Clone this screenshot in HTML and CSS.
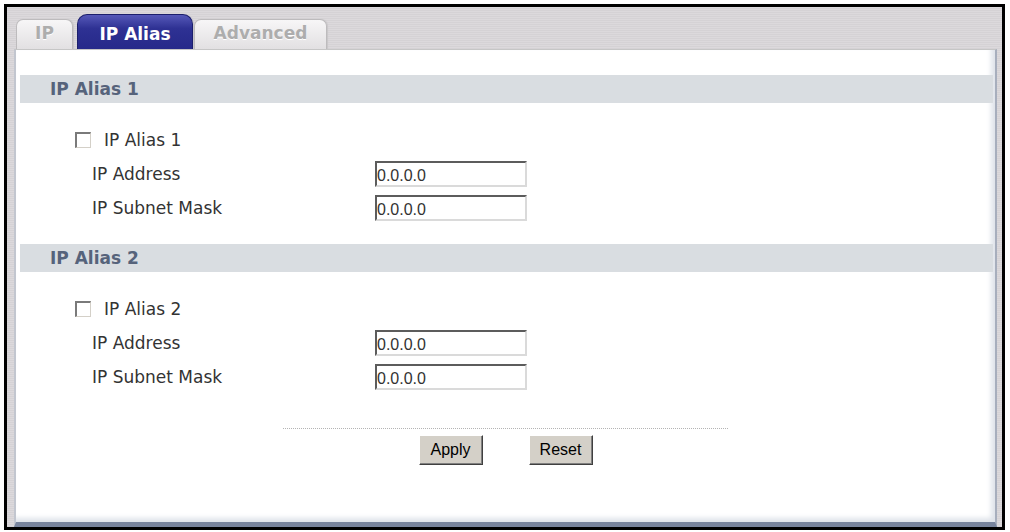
FILE: index.html
```html
<!DOCTYPE html>
<html lang="en">
<head>
    <meta charset="UTF-8">
    <meta name="viewport" content="width=device-width, initial-scale=1.0">
    <title>IP Alias</title>
    <link rel="stylesheet" href="styles.css">
</head>
<body>
    <div class="frame">
        <!-- Tabs -->
        <div class="tabs">
            <div class="tab">IP</div>
            <div class="tab active">IP Alias</div>
            <div class="tab">Advanced</div>
        </div>

        <div class="panel">
            <div class="section">
                <div class="section-title">IP Alias 1</div>
                <div class="section-body">
                    <label class="row check-row"><input type="checkbox" class="check">IP Alias 1</label>
                    <div class="row">
                        <span class="label">IP Address</span>
                        <input type="text" class="field" value="0.0.0.0">
                    </div>
                    <div class="row">
                        <span class="label">IP Subnet Mask</span>
                        <input type="text" class="field" value="0.0.0.0">
                    </div>
                </div>
            </div>

            <div class="section">
                <div class="section-title">IP Alias 2</div>
                <div class="section-body">
                    <label class="row check-row"><input type="checkbox" class="check">IP Alias 2</label>
                    <div class="row">
                        <span class="label">IP Address</span>
                        <input type="text" class="field" value="0.0.0.0">
                    </div>
                    <div class="row">
                        <span class="label">IP Subnet Mask</span>
                        <input type="text" class="field" value="0.0.0.0">
                    </div>
                </div>
            </div>

            <div class="actions">
                <div class="divider"></div>
                <div class="buttons">
                    <button class="btn">Apply</button>
                    <button class="btn">Reset</button>
                </div>
            </div>
        </div>
    </div>
</body>
</html>
```

FILE: styles.css
```css
/* Page */
body {
    margin: 0;
    background: #fff;
    font-family: "DejaVu Sans", Verdana, sans-serif;
    font-size: 17px;
    color: #333;
}

.frame {
    margin: 4px 0 0 4px;
    width: 1001px;
    height: 526px;
    box-sizing: border-box;
    border: 3px solid #000;
    display: flex;
    flex-direction: column;
    background: repeating-linear-gradient(#dcd9dc 0 1px, #d5d2d5 1px 2px);
}

/* Tabs */
.tabs {
    height: 42px;
    display: flex;
    align-items: flex-end;
    padding-left: 9px;
}

.tab {
    box-sizing: border-box;
    height: 30px;
    line-height: 26px;
    text-align: center;
    font-weight: bold;
    color: #adadad;
    text-shadow: 0 1px 0 #fff;
    background: linear-gradient(#f7f6f7, #e2e0e2);
    border: 1px solid #bdbbbd;
    border-bottom: none;
    border-radius: 7px 7px 0 0;
    box-shadow: 1px 0 1px #c8c6c8;
}

.tab:nth-child(1) {
    width: 57px;
    margin-right: 4px;
}

.tab:nth-child(3) {
    width: 133px;
}

.tab.active {
    width: 116px;
    height: 35px;
    padding-top: 5px;
    line-height: 28px;
    margin-right: 1px;
    color: #fff;
    text-shadow: none;
    background: linear-gradient(#5558b8, #2e3193 40%, #26298a);
    border-color: #1c1f6c;
    border-radius: 10px 10px 0 0;
}

/* Panel */
.panel {
    flex: 1;
    margin: 0 5px 0 7px;
    background: #fff;
    border-top: 1px solid #c6c6c6;
    border-left: 2px solid #c2c6cf;
    border-right: 2px solid #a7aebd;
    border-bottom: 5px solid #78849d;
    box-shadow: inset -4px -4px 5px #dfe3ea;
}

.section:first-child {
    margin-top: 25px;
}

.section-title {
    height: 28px;
    line-height: 28px;
    margin: 0 2px 0 4px;
    padding-left: 30px;
    background: #d9dde1;
    color: #56637b;
    font-weight: bold;
}

.section-body {
    padding: 20px 0 19px;
}

.row {
    height: 34px;
    display: flex;
    align-items: center;
    padding-left: 76px;
}

.check-row {
    padding-left: 59px;
}

.check {
    appearance: none;
    width: 16px;
    height: 16px;
    margin: 0 13px 0 0;
    box-sizing: border-box;
    background: #fff;
    border-top: 2px solid #7a7a7a;
    border-left: 2px solid #7a7a7a;
    border-right: 1px solid #d4d0c8;
    border-bottom: 1px solid #d4d0c8;
}

.label {
    width: 283px;
}

.field {
    width: 152px;
    height: 26px;
    box-sizing: border-box;
    padding: 4px 0 0 0;
    font-family: "Liberation Sans", Arial, sans-serif;
    font-size: 16px;
    color: #333;
    border-top: 2px solid #5c5c5c;
    border-left: 2px solid #5c5c5c;
    border-right: 2px solid #dadada;
    border-bottom: 2px solid #dadada;
    outline: none;
}

/* Buttons */
.actions {
    margin-top: 15px;
}

.divider {
    width: 445px;
    margin: 0 auto;
    border-top: 1px dotted #b4b4b4;
}

.buttons {
    display: flex;
    justify-content: center;
    gap: 46px;
    margin-top: 6px;
}

.btn {
    width: 64px;
    height: 30px;
    padding: 0;
    font-family: "Liberation Sans", Arial, sans-serif;
    font-size: 16px;
    color: #000;
    background: #d4d0c8;
    border-top: 1px solid #fff;
    border-left: 1px solid #fff;
    border-right: 1px solid #404040;
    border-bottom: 1px solid #404040;
    box-shadow: inset -1px -1px #808080;
}
```
